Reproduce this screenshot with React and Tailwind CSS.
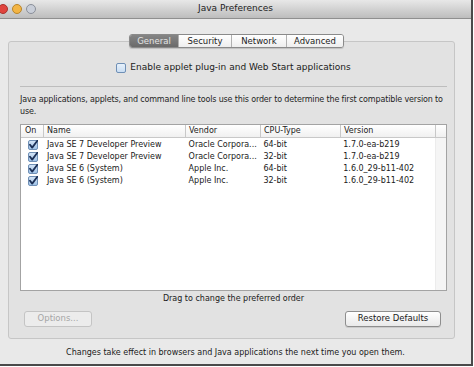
import React from 'react';

const FONT = { fontFamily: '"DejaVu Sans", "Liberation Sans", sans-serif' };

const ROWS = [
  { name: 'Java SE 7 Developer Preview', vendor: 'Oracle Corpora...', cpu: '64-bit', version: '1.7.0-ea-b219' },
  { name: 'Java SE 7 Developer Preview', vendor: 'Oracle Corpora...', cpu: '32-bit', version: '1.7.0-ea-b219' },
  { name: 'Java SE 6 (System)', vendor: 'Apple Inc.', cpu: '64-bit', version: '1.6.0_29-b11-402' },
  { name: 'Java SE 6 (System)', vendor: 'Apple Inc.', cpu: '32-bit', version: '1.6.0_29-b11-402' },
];

const TABS = ['General', 'Security', 'Network', 'Advanced'];

function CheckBox({ checked }) {
  return (
    <svg width="10" height="10" viewBox="0 0 10 10" className="shrink-0">
      <defs>
        <linearGradient id={checked ? 'cbOn' : 'cbOff'} x1="0" y1="0" x2="0" y2="1">
          <stop offset="0" stopColor={checked ? '#d6e6f7' : '#e9f2fb'} />
          <stop offset="1" stopColor={checked ? '#9cc0e6' : '#c7dcf2'} />
        </linearGradient>
      </defs>
      <rect x="0.5" y="0.5" width="9" height="9" rx="1.5" fill={`url(#${checked ? 'cbOn' : 'cbOff'})`} stroke="#6f8fb5" />
      {checked && <path d="M2 4.8 L4.2 7.6 L9.6 0.4" fill="none" stroke="#1b2f55" strokeWidth="1.8" strokeLinecap="round" strokeLinejoin="round" />}
    </svg>
  );
}

export default function App() {
  return (
    <div className="relative h-[367px] w-[474px] overflow-hidden bg-white text-[#1a1a1a]" style={FONT}>
      <div className="flex h-[366px] w-[473px] flex-col border-r-2 border-b-2 border-[#4a4a4a] bg-[#e9e9e9]">
        {/* title bar */}
        <div className="relative flex h-[19px] shrink-0 items-center justify-center border-b border-[#8f8f8f] bg-gradient-to-b from-[#e8e8e8] to-[#bdbdbd]">
          <div className="absolute left-[-2px] top-[4px] flex gap-[4px]">
            <span className="h-[10px] w-[10px] rounded-full border border-[#a8332e] bg-[#e0443e]" />
            <span className="h-[10px] w-[10px] rounded-full border border-[#b9852a] bg-[#f3b545]" />
            <span className="h-[10px] w-[10px] rounded-full border border-[#8a8f99] bg-[#c9ced8]" />
          </div>
          <span className="text-[9px] text-[#222]">Java Preferences</span>
        </div>

        <div className="flex flex-1 flex-col px-[8px] pt-[15px]">
          {/* tabs */}
          <div className="relative z-10 -mb-[7px] flex justify-center pl-[2px]">
            <div className="flex h-[14px] overflow-hidden rounded-[3px] border border-[#8a8a8a] text-[8.5px] shadow-[0_1px_1px_rgba(0,0,0,0.15)]">
              {TABS.map((t, i) => (
                <div
                  key={t}
                  className={`flex items-center justify-center ${i > 0 ? 'border-l border-[#b0b0b0]' : ''} ${
                    i === 0
                      ? 'w-[48px] bg-gradient-to-b from-[#858585] to-[#6a6a6a] text-[#e4e4e4]'
                      : 'bg-gradient-to-b from-[#ffffff] to-[#eeeeee] font-medium text-[#222]'
                  } ${i === 1 ? 'w-[53px]' : ''} ${i === 2 ? 'w-[55px]' : ''} ${i === 3 ? 'w-[57px]' : ''}`}
                >
                  {t}
                </div>
              ))}
            </div>
          </div>

          {/* group box */}
          <div className="flex h-[298px] w-[447px] flex-col rounded-[3px] border border-[#c6c6c6] bg-[#e2e2e2] pl-[11px] pr-[7px] pt-[19px]">
            <div className="flex items-center justify-center gap-[4px] text-[9px]">
              <CheckBox checked={false} />
              <span>Enable applet plug-in and Web Start applications</span>
            </div>
            <div className="mt-[11px] h-px bg-[#bdbdbd]" />
            <p className="mt-[7px] whitespace-nowrap text-[8px] leading-[12px] tracking-[-0.15px] text-[#1e1e1e]">
              Java applications, applets, and command line tools use this order to determine the first compatible version to
              <br />
              use.
            </p>

            {/* table */}
            <div className="mt-[6px] flex h-[167px] w-[427px] flex-col border border-[#a3a3a3] bg-white text-[8px]">
              <div className="flex h-[13px] shrink-0 items-center border-b border-[#c8c8c8] bg-gradient-to-b from-[#ffffff] to-[#f0f0f0] text-[#222]">
                <div className="w-[23px] border-r border-[#c8c8c8] pl-[4px]">On</div>
                <div className="w-[142px] border-r border-[#c8c8c8] pl-[3px]">Name</div>
                <div className="w-[75px] border-r border-[#c8c8c8] pl-[3px]">Vendor</div>
                <div className="w-[80px] border-r border-[#c8c8c8] pl-[3px]">CPU-Type</div>
                <div className="w-[95px] border-r border-[#c8c8c8] pl-[3px]">Version</div>
              </div>
              <div className="flex flex-1">
                <div className="flex w-[414px] flex-col pt-[1px]">
                  {ROWS.map((r, i) => (
                    <div key={i} className="flex h-[12px] items-center">
                      <div className="flex w-[23px] justify-center pl-[2px]">
                        <CheckBox checked />
                      </div>
                      <div className="w-[142px] pl-[3px]">{r.name}</div>
                      <div className="w-[75px] pl-[3px]">{r.vendor}</div>
                      <div className="w-[80px] pl-[3px]">{r.cpu}</div>
                      <div className="w-[95px] pl-[3px]">{r.version}</div>
                    </div>
                  ))}
                </div>
                <div className="flex-1 border-l border-[#ececec] bg-[#f5f5f5]" />
              </div>
            </div>

            <div className="mt-[2px] text-center text-[8px] leading-[12px]">Drag to change the preferred order</div>

            <div className="mt-[6px] flex items-center justify-between pl-[4px] pr-[6px]">
              <div className="flex h-[16px] w-[68px] items-center justify-center rounded-[3px] border border-[#c4c4c4] bg-[#ececec] text-[8.5px] text-[#a6a6a6]">
                Options...
              </div>
              <div className="flex h-[16px] w-[96px] items-center justify-center rounded-[3px] border border-[#8e8e8e] bg-gradient-to-b from-[#ffffff] to-[#e9e9e9] text-[8.5px] text-[#1a1a1a] shadow-[0_1px_0_rgba(0,0,0,0.1)]">
                Restore Defaults
              </div>
            </div>
          </div>

          <div className="mt-[8px] text-center text-[8px] leading-[12px]">
            Changes take effect in browsers and Java applications the next time you open them.
          </div>
        </div>
      </div>
    </div>
  );
}
